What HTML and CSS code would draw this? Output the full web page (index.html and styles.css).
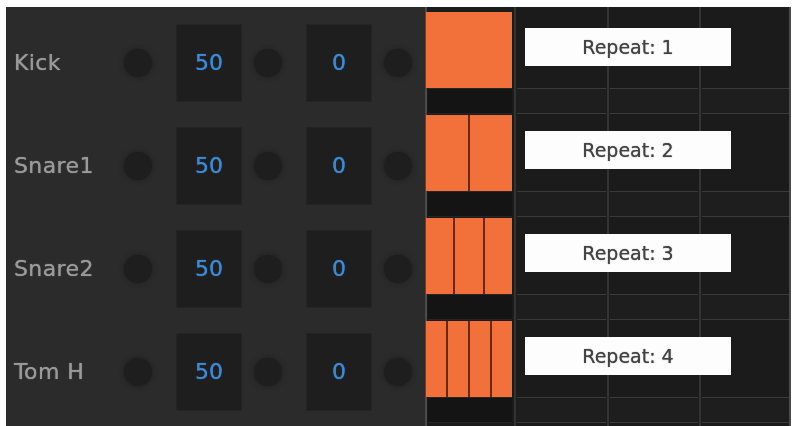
FILE: index.html
```html
<!DOCTYPE html>
<html>
<head>
<meta charset="utf-8">
<link rel="stylesheet" href="styles.css">
</head>
<body>
<div class="frame">
  <div class="controls">
    <div class="row">
      <div class="label">Kick</div>
      <div class="knob"></div>
      <div class="value">50</div>
      <div class="knob"></div>
      <div class="value">0</div>
      <div class="knob"></div>
    </div>
    <div class="row">
      <div class="label">Snare1</div>
      <div class="knob"></div>
      <div class="value">50</div>
      <div class="knob"></div>
      <div class="value">0</div>
      <div class="knob"></div>
    </div>
    <div class="row">
      <div class="label">Snare2</div>
      <div class="knob"></div>
      <div class="value">50</div>
      <div class="knob"></div>
      <div class="value">0</div>
      <div class="knob"></div>
    </div>
    <div class="row">
      <div class="label">Tom H</div>
      <div class="knob"></div>
      <div class="value">50</div>
      <div class="knob"></div>
      <div class="value">0</div>
      <div class="knob"></div>
    </div>
  </div>
  <div class="grid">
    <div class="lane">
      <div class="lane-top">
        <div class="pads"><div class="seg"></div></div>
        <div class="repeat">Repeat: 1</div>
      </div>
      <div class="lane-bottom"><div class="cell first"></div><div class="cell"></div><div class="cell"></div><div class="cell"></div></div>
    </div>
    <div class="lane">
      <div class="lane-top">
        <div class="pads"><div class="seg"></div><div class="seg"></div></div>
        <div class="repeat">Repeat: 2</div>
      </div>
      <div class="lane-bottom"><div class="cell first"></div><div class="cell"></div><div class="cell"></div><div class="cell"></div></div>
    </div>
    <div class="lane">
      <div class="lane-top">
        <div class="pads"><div class="seg"></div><div class="seg"></div><div class="seg"></div></div>
        <div class="repeat">Repeat: 3</div>
      </div>
      <div class="lane-bottom"><div class="cell first"></div><div class="cell"></div><div class="cell"></div><div class="cell"></div></div>
    </div>
    <div class="lane">
      <div class="lane-top">
        <div class="pads"><div class="seg"></div><div class="seg"></div><div class="seg"></div><div class="seg"></div></div>
        <div class="repeat">Repeat: 4</div>
      </div>
      <div class="lane-bottom"><div class="cell first"></div><div class="cell"></div><div class="cell"></div><div class="cell"></div></div>
    </div>
  </div>
</div>
</body>
</html>
```
FILE: styles.css
```css
html, body {
  margin: 0;
  padding: 0;
  background: #ffffff;
}
body {
  width: 793px;
  height: 426px;
  overflow: hidden;
  font-family: "DejaVu Sans", "Liberation Sans", sans-serif;
}
.frame {
  display: flex;
  margin: 7px 0 0 6px;
  width: 785px;
  height: 419px;
  filter: blur(0.5px);
}
.controls {
  width: 419px;
  background: #2b2b2b;
  padding-top: 4px;
  box-sizing: border-box;
}
.row {
  height: 103px;
  display: flex;
  align-items: center;
}
.label {
  width: 110px;
  padding-left: 8px;
  color: #9a9a9a;
  font-size: 22px;
  letter-spacing: 0.4px;
  text-shadow: 0 0 1px #9a9a9a;
}
.knob {
  width: 28px;
  height: 28px;
  border-radius: 50%;
  background: #1e1e1e;
  box-shadow: 0 0 4px 1px #222222;
}
.value {
  width: 66px;
  height: 78px;
  margin: 0 12px 0 24px;
  background: #1e1e1e;
  box-shadow: inset 0 0 0 1px #242424;
  color: #3d8ad6;
  font-size: 22px;
  text-shadow: 0 0 1px #3d8ad6;
  display: flex;
  align-items: center;
  justify-content: center;
}
.grid {
  width: 366px;
  padding-top: 4px;
  box-sizing: border-box;
  background:
    linear-gradient(#4a4a4a, #4a4a4a) 0 0 / 2px 100% no-repeat,
    linear-gradient(#343434, #343434) 89px 0 / 2px 100% no-repeat,
    linear-gradient(#343434, #343434) 182px 0 / 2px 100% no-repeat,
    linear-gradient(#343434, #343434) 274px 0 / 2px 100% no-repeat,
    linear-gradient(#4a4a4a, #4a4a4a) 364px 0 / 2px 100% no-repeat,
    #1b1b1b;
}
.lane {
  height: 103px;
  display: flex;
  flex-direction: column;
}
.lane-top {
  height: 77px;
  display: flex;
  align-items: center;
}
.pads {
  width: 86px;
  height: 76px;
  margin-left: 1px;
  display: flex;
  gap: 2px;
  background: #6a2810;
}
.seg {
  flex: 1;
  background: #f2703a;
}
.repeat {
  width: 206px;
  height: 38px;
  margin: 0 0 5px 13px;
  background: #fdfdfd;
  color: #424242;
  font-size: 19px;
  text-shadow: 0 0 1px #555555;
  display: flex;
  align-items: center;
  justify-content: center;
}
.lane-bottom {
  height: 26px;
  display: grid;
  grid-template-columns: 90px 93px 92px 91px;
}
.cell {
  border-top: 1px solid #3a3a3a;
  border-bottom: 1px solid #3a3a3a;
  background: #1e1e1e;
  margin: 0 2px;
}
.cell.first {
  background: #141414;
  margin: 0 3px;
  border-color: #262626;
}
```
